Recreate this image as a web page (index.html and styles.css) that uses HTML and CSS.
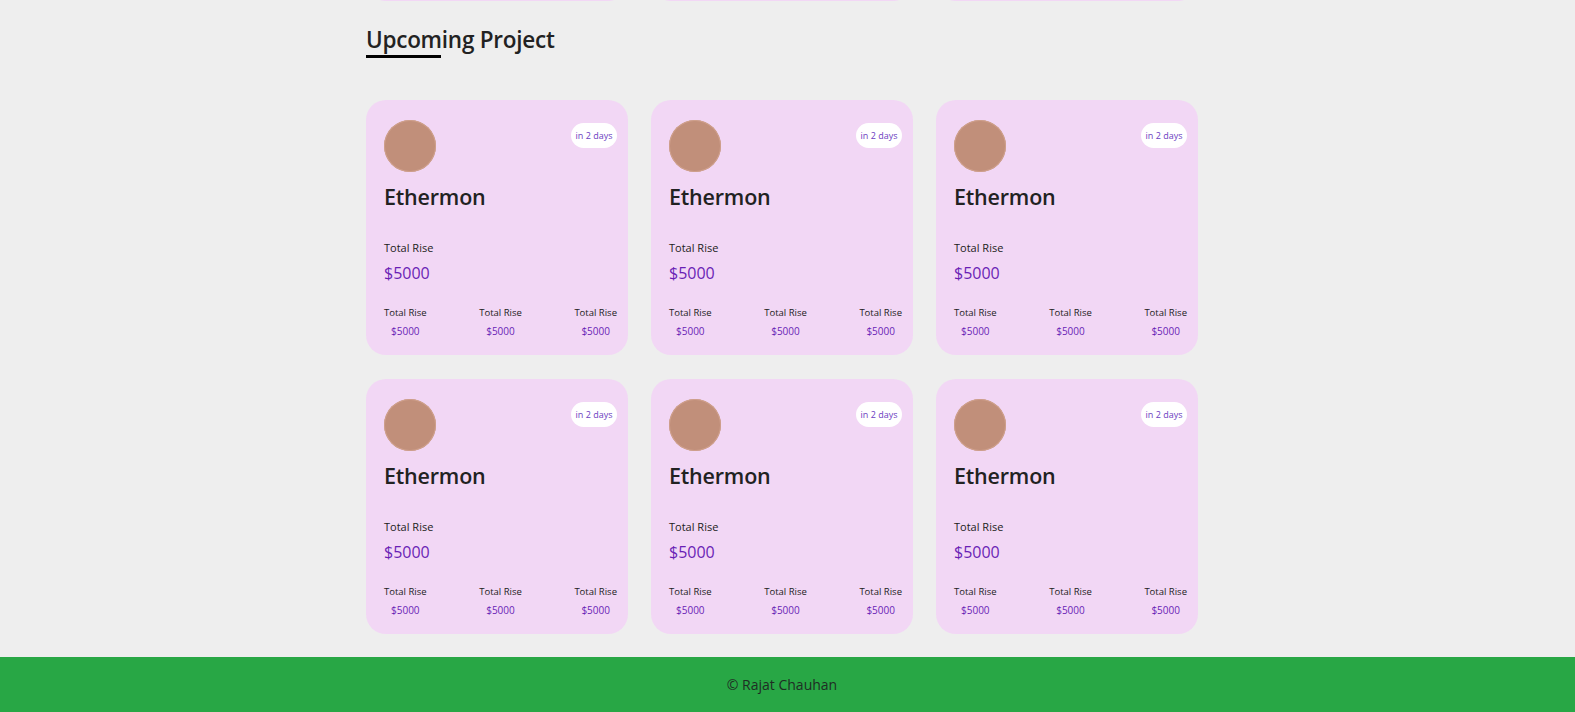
FILE: index.html
```html
<!DOCTYPE html>
<html lang="en">
<head>
<meta charset="utf-8">
<title>Upcoming Project</title>
<link rel="stylesheet" href="styles.css">
</head>
<body>
<div class="prev-strip">
  <div class="prev-card"></div>
  <div class="prev-card"></div>
  <div class="prev-card"></div>
</div>
<section class="upcoming">
  <h2 class="section-title">Upcoming Project<span class="title-bar"></span></h2>
  <div class="grid">
    <div class="card">
      <div class="card-top"><div class="avatar"></div><span class="badge">in 2 days</span></div>
      <h3 class="name">Ethermon</h3>
      <p class="label">Total Rise</p>
      <p class="amount">$5000</p>
      <div class="stats">
        <div class="stat"><span class="stat-label">Total Rise</span><span class="stat-value">$5000</span></div>
        <div class="stat"><span class="stat-label">Total Rise</span><span class="stat-value">$5000</span></div>
        <div class="stat"><span class="stat-label">Total Rise</span><span class="stat-value">$5000</span></div>
      </div>
    </div>
    <div class="card">
      <div class="card-top"><div class="avatar"></div><span class="badge">in 2 days</span></div>
      <h3 class="name">Ethermon</h3>
      <p class="label">Total Rise</p>
      <p class="amount">$5000</p>
      <div class="stats">
        <div class="stat"><span class="stat-label">Total Rise</span><span class="stat-value">$5000</span></div>
        <div class="stat"><span class="stat-label">Total Rise</span><span class="stat-value">$5000</span></div>
        <div class="stat"><span class="stat-label">Total Rise</span><span class="stat-value">$5000</span></div>
      </div>
    </div>
    <div class="card">
      <div class="card-top"><div class="avatar"></div><span class="badge">in 2 days</span></div>
      <h3 class="name">Ethermon</h3>
      <p class="label">Total Rise</p>
      <p class="amount">$5000</p>
      <div class="stats">
        <div class="stat"><span class="stat-label">Total Rise</span><span class="stat-value">$5000</span></div>
        <div class="stat"><span class="stat-label">Total Rise</span><span class="stat-value">$5000</span></div>
        <div class="stat"><span class="stat-label">Total Rise</span><span class="stat-value">$5000</span></div>
      </div>
    </div>
    <div class="card">
      <div class="card-top"><div class="avatar"></div><span class="badge">in 2 days</span></div>
      <h3 class="name">Ethermon</h3>
      <p class="label">Total Rise</p>
      <p class="amount">$5000</p>
      <div class="stats">
        <div class="stat"><span class="stat-label">Total Rise</span><span class="stat-value">$5000</span></div>
        <div class="stat"><span class="stat-label">Total Rise</span><span class="stat-value">$5000</span></div>
        <div class="stat"><span class="stat-label">Total Rise</span><span class="stat-value">$5000</span></div>
      </div>
    </div>
    <div class="card">
      <div class="card-top"><div class="avatar"></div><span class="badge">in 2 days</span></div>
      <h3 class="name">Ethermon</h3>
      <p class="label">Total Rise</p>
      <p class="amount">$5000</p>
      <div class="stats">
        <div class="stat"><span class="stat-label">Total Rise</span><span class="stat-value">$5000</span></div>
        <div class="stat"><span class="stat-label">Total Rise</span><span class="stat-value">$5000</span></div>
        <div class="stat"><span class="stat-label">Total Rise</span><span class="stat-value">$5000</span></div>
      </div>
    </div>
    <div class="card">
      <div class="card-top"><div class="avatar"></div><span class="badge">in 2 days</span></div>
      <h3 class="name">Ethermon</h3>
      <p class="label">Total Rise</p>
      <p class="amount">$5000</p>
      <div class="stats">
        <div class="stat"><span class="stat-label">Total Rise</span><span class="stat-value">$5000</span></div>
        <div class="stat"><span class="stat-label">Total Rise</span><span class="stat-value">$5000</span></div>
        <div class="stat"><span class="stat-label">Total Rise</span><span class="stat-value">$5000</span></div>
      </div>
    </div>
  </div>
</section>
<footer class="footer">
  <p class="footer-text">© Rajat Chauhan</p>
</footer>
</body>
</html>
```
FILE: styles.css
```css
* { box-sizing: border-box; }
html, body {
  margin: 0;
  padding: 0;
}
body {
  background: #eeeeee;
  font-family: "Open Sans", "DejaVu Sans", sans-serif;
  color: #212529;
}
.prev-strip {
  width: 843px;
  padding-right: 11px;
  margin: 0 auto;
  height: 1px;
  overflow: hidden;
  display: flex;
  align-items: flex-end;
  gap: 23px;
}
.prev-card {
  flex: 1;
  height: 40px;
  background: #f2d7f5;
  border-radius: 20px;
}
.upcoming {
  width: 843px;
  padding-right: 11px;
  margin: 0 auto;
}
.section-title {
  margin: 23px 0 0;
  font-size: 22.5px;
  line-height: 31px;
  font-weight: 600;
  letter-spacing: -0.25px;
  color: #222;
  display: inline-block;
}
.title-bar {
  display: block;
  width: 75px;
  height: 3px;
  background: #000;
}
.grid {
  margin-top: 42px;
  display: grid;
  grid-template-columns: repeat(3, 1fr);
  gap: 24px 23px;
}
.card {
  background: #f2d7f5;
  border-radius: 20px;
  height: 255px;
  padding: 20px 11px 0 18px;
}
.card-top {
  display: flex;
  justify-content: space-between;
  align-items: flex-start;
}
.avatar {
  width: 52px;
  height: 52px;
  border-radius: 50%;
  background: #c18f7a;
  box-shadow: inset 0 0 0 1px #cfa08c;
}
.badge {
  margin-top: 3px;
  width: 46px;
  height: 25px;
  border-radius: 13px;
  background: #ffffff;
  color: #6b3dbf;
  font-size: 9px;
  display: flex;
  align-items: center;
  justify-content: center;
  white-space: nowrap;
}
.name {
  margin: 10px 0 0;
  font-size: 21.5px;
  line-height: 30px;
  font-weight: 600;
  letter-spacing: -0.2px;
  color: #222;
}
.label {
  margin: 28px 0 0;
  font-size: 11px;
  line-height: 15px;
  color: #222;
}
.amount {
  margin: 7px 0 0;
  font-size: 16px;
  line-height: 22px;
  color: #6a1fb5;
}
.stats {
  margin-top: 22px;
  display: flex;
  justify-content: space-between;
}
.stat {
  display: flex;
  flex-direction: column;
  align-items: center;
}
.stat-label {
  font-size: 9.5px;
  line-height: 14px;
  color: #222;
}
.stat-value {
  margin-top: 4px;
  font-size: 10px;
  line-height: 14px;
  color: #6a1fb5;
}
.footer {
  margin-top: 23px;
  height: 55px;
  background: #28a745;
  display: flex;
  align-items: center;
  justify-content: center;
  padding-right: 11px;
}
.footer-text {
  margin: 0;
  font-size: 14px;
  color: #1f2d24;
}
```
